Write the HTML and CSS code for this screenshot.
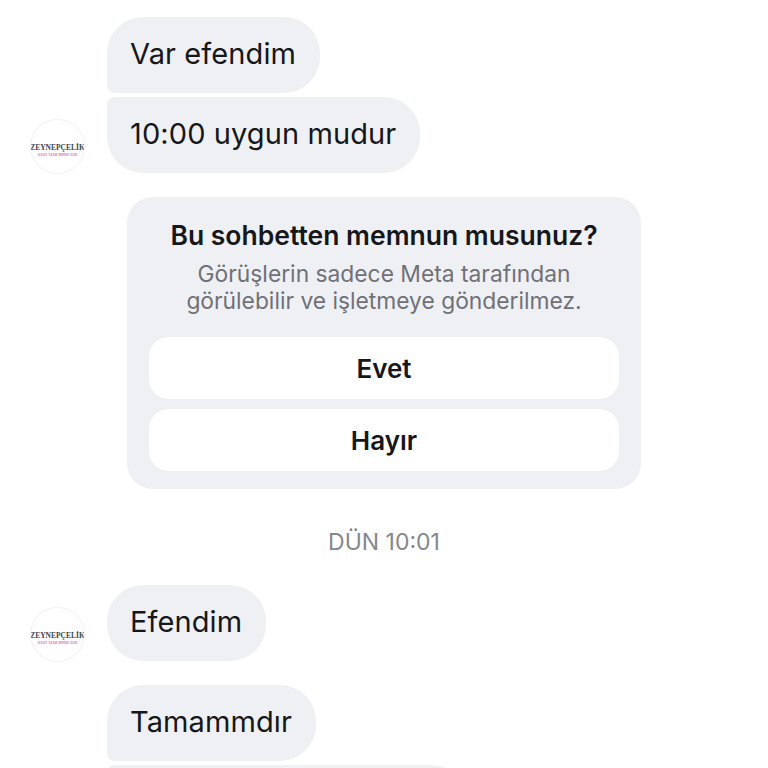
FILE: index.html
```html
<!DOCTYPE html>
<html lang="tr">

<head>
  <meta charset="UTF-8" />
  <meta name="viewport" content="width=device-width, initial-scale=1.0" />
  <title>Sohbet</title>
  <link rel="stylesheet" href="styles.css">
</head>

<body>
  <div id="chat">
    <div class="row">
      <div class="avatar-slot"></div>
      <div class="bubble bubble-first">Var efendim</div>
    </div>
    <div class="row row-tight">
      <div class="avatar">
        <span class="logo-name">ZEYNEPÇELİK</span>
        <span class="logo-sub">0531 1456 BRİM 026</span>
      </div>
      <div class="bubble bubble-last">10:00 uygun mudur</div>
    </div>

    <div class="survey">
      <h2>Bu sohbetten memnun musunuz?</h2>
      <p>Görüşlerin sadece Meta tarafından<br>görülebilir ve işletmeye gönderilmez.</p>
      <button class="survey-btn" type="button">Evet</button>
      <button class="survey-btn" type="button">Hayır</button>
    </div>

    <div class="time">DÜN 10:01</div>

    <div class="row">
      <div class="avatar">
        <span class="logo-name">ZEYNEPÇELİK</span>
        <span class="logo-sub">0531 1456 BRİM 026</span>
      </div>
      <div class="bubble">Efendim</div>
    </div>
    <div class="row row-gap">
      <div class="avatar-slot"></div>
      <div class="bubble bubble-first">Tamammdır</div>
    </div>
    <div class="row row-tight">
      <div class="avatar-slot"></div>
      <div class="bubble bubble-next"></div>
    </div>
  </div>
</body>

</html>
```

FILE: styles.css
```css
html,
body {
  margin: 0;
  height: 768px;
  overflow: hidden;
  background: #fff;
}

#chat {
  height: 768px;
  box-sizing: border-box;
  overflow: hidden;
  padding: 17px 0 0 30px;
  font-family: Inter, "Liberation Sans", sans-serif;
  color: #16171a;
}

.row {
  display: flex;
  align-items: flex-end;
  gap: 22px;
}

.row-tight {
  margin-top: 4px;
}

.row-gap {
  margin-top: 24px;
}

.avatar-slot {
  width: 55px;
  flex: none;
}

.avatar {
  width: 55px;
  height: 55px;
  flex: none;
  box-sizing: border-box;
  margin-bottom: -1px;
  padding-top: 8px;
  border: 1px solid #f1f1f3;
  border-radius: 50%;
  display: flex;
  flex-direction: column;
  align-items: center;
  justify-content: center;
  gap: 1px;
  white-space: nowrap;
  overflow: hidden;
}

.logo-name {
  font-family: "Liberation Serif", serif;
  font-weight: bold;
  font-size: 7.5px;
  line-height: 8px;
  color: #444;
}

.logo-sub {
  font-size: 4px;
  line-height: 4px;
  font-weight: bold;
  color: #d68fbd;
}

.bubble {
  height: 76px;
  padding: 0 24px 0 23px;
  border-radius: 36px;
  background: #eff0f4;
  font-size: 29px;
  line-height: 74px;
  letter-spacing: 0.1px;
}

.bubble-first {
  border-bottom-left-radius: 8px;
}

.bubble-last {
  border-top-left-radius: 8px;
}

.bubble-next {
  width: 360px;
  padding: 0;
  border-top-left-radius: 8px;
}

.survey {
  width: 514px;
  height: 292px;
  box-sizing: border-box;
  margin: 24px 0 0 97px;
  padding: 20px 22px 0;
  border-radius: 26px;
  background: #eff0f4;
  text-align: center;
}

.survey h2 {
  margin: 0;
  font-size: 26.5px;
  line-height: 36px;
  font-weight: 600;
}

.survey p {
  margin: 7px 0 23px;
  font-size: 22.8px;
  line-height: 27px;
  color: #6f7177;
}

.survey-btn {
  display: block;
  width: 100%;
  height: 62px;
  margin-bottom: 10px;
  border: 0;
  border-radius: 20px;
  background: #fff;
  font-family: inherit;
  font-size: 26px;
  font-weight: 600;
  color: #16171a;
}

.time {
  margin: 37px 0 27px 0;
  padding-right: 30px;
  text-align: center;
  font-size: 23px;
  line-height: 32px;
  color: #85878c;
}
```
